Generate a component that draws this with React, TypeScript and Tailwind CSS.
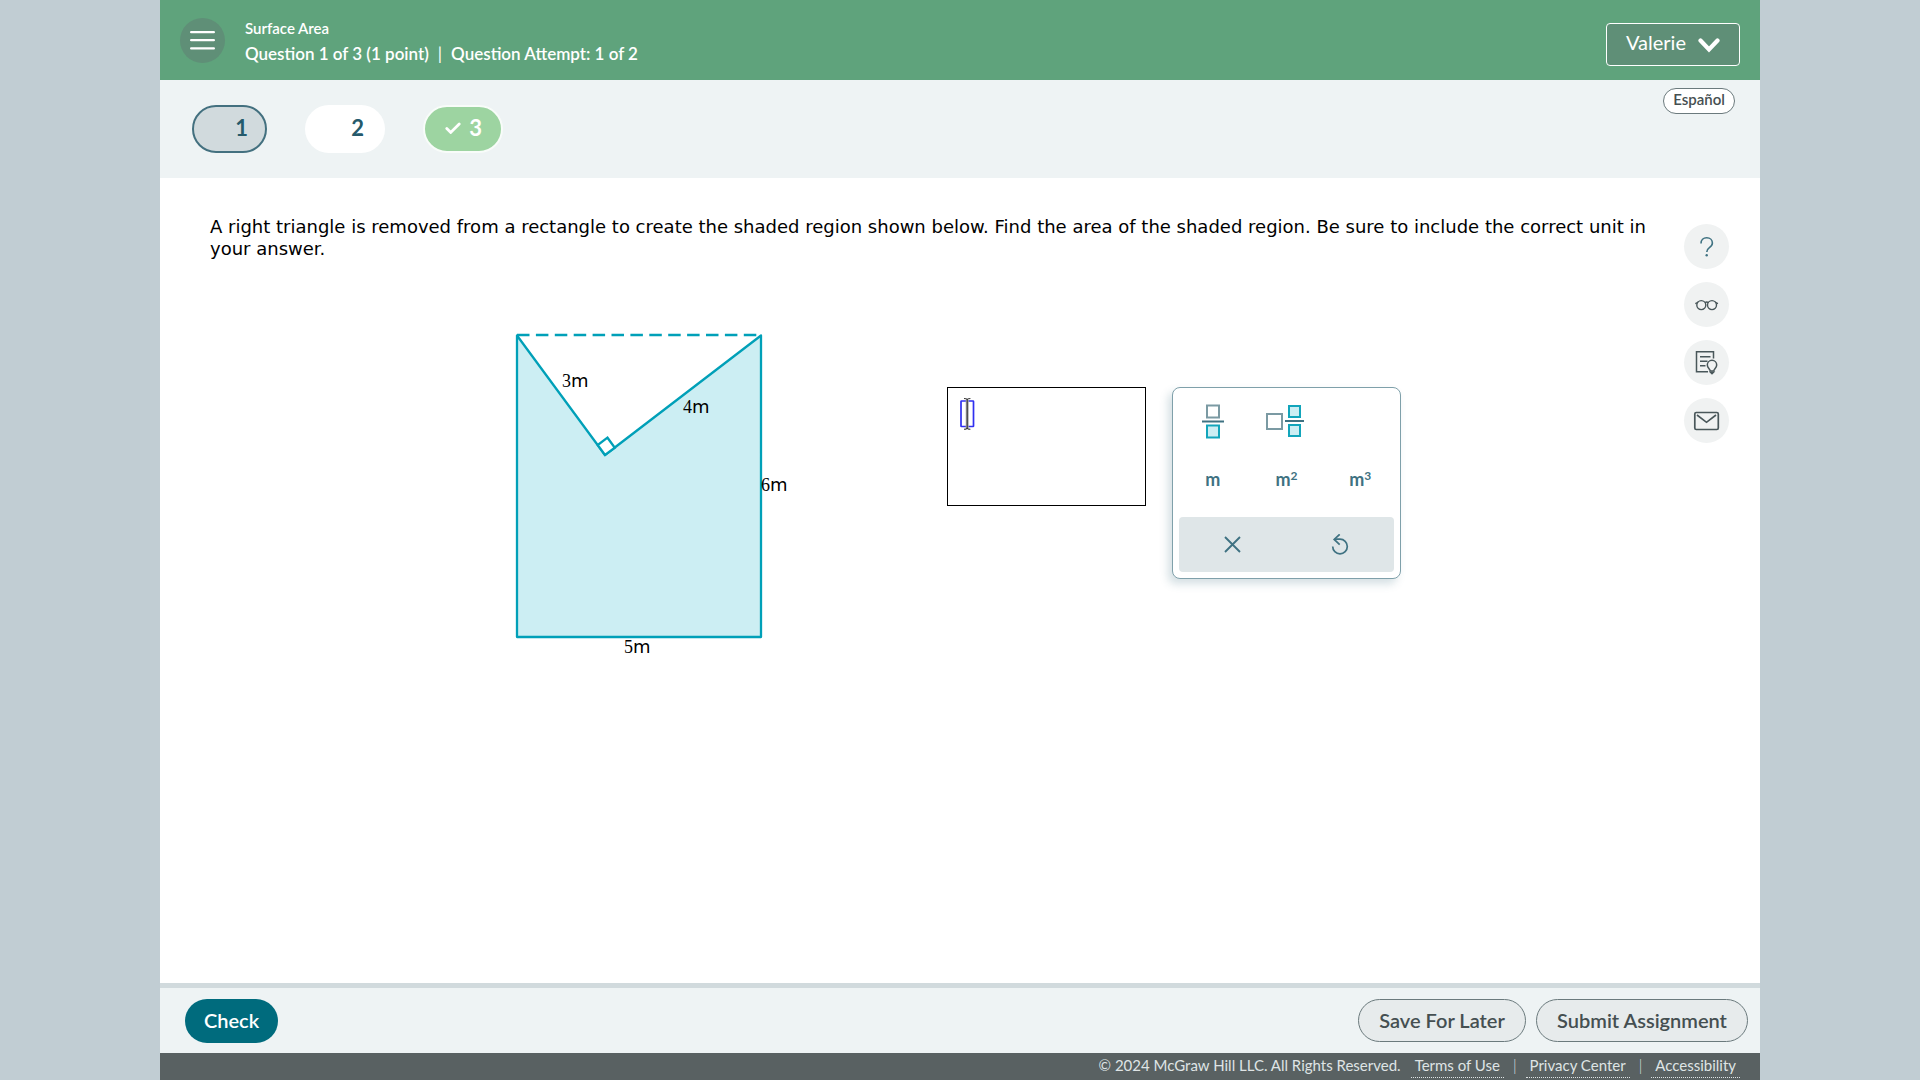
import React from 'react';

const tools = [
  { label: 'Help', icon: 'help' as const },
  { label: 'Read aloud view', icon: 'glasses' as const },
  { label: 'Notes', icon: 'notes' as const },
  { label: 'Message instructor', icon: 'mail' as const },
];

const footerLinks = ['Terms of Use', 'Privacy Center', 'Accessibility'];

const ToolIcon: React.FC<{ name: 'help' | 'glasses' | 'notes' | 'mail' }> = ({ name }) => {
  if (name === 'help') {
    return (
      <svg width="45" height="45" viewBox="0 0 45 45" fill="none" stroke="#3f7282" strokeWidth="1.6">
        <path d="M17 19.5c0-3.4 2.3-5.7 5.7-5.7s5.7 2.2 5.7 5.2c0 2.3-1.3 3.5-3 4.6-1.8 1.2-2.6 2-2.6 4.4" />
        <circle cx="22.7" cy="31.2" r="1.2" fill="#3f7282" stroke="none" />
      </svg>
    );
  }
  if (name === 'glasses') {
    return (
      <svg width="45" height="45" viewBox="0 0 45 45" fill="none" stroke="#49575a" strokeWidth="1.4">
        <circle cx="17.3" cy="23.1" r="4.5" />
        <circle cx="28" cy="23.1" r="4.5" />
        <path d="M21 20.8c1-.9 2.4-.9 3.4 0M11.3 21.6l1.6-.6 1.2-1M34 21.6l-1.6-.6-1.2-1" />
      </svg>
    );
  }
  if (name === 'notes') {
    return (
      <svg width="45" height="45" viewBox="0 0 45 45" fill="none" stroke="#49575a" strokeWidth="1.5">
        <path d="M29.5 18.5v-6.7h-17v20H24" />
        <path d="M16 16.7h10.5M16 21.2h7.5M16 25.7h5.5" />
        <path d="M26.2 31c0-1.8-2.9-2.9-2.9-6a4.7 4.7 0 0 1 9.4 0c0 3.1-2.9 4.2-2.9 6z" />
        <path d="M26.5 32.2h3l-1.5 1.5z" fill="#49575a" />
      </svg>
    );
  }
  return (
    <svg width="45" height="45" viewBox="0 0 45 45" fill="none" stroke="#49575a" strokeWidth="1.7">
      <rect x="10.8" y="14.5" width="23.5" height="17" rx="1.5" />
      <path d="M13 17l9.5 7.3L32 17" />
    </svg>
  );
};

// Rectangle with the right triangle cut out of its top edge
const Figure = () => (
  <svg width="280" height="325" viewBox="0 0 280 325" role="img" aria-label="Shaded region" className="overflow-visible">
    <g stroke="#00a0b8" strokeWidth="2.3">
      <path d="M0 2.5v301.500h244V2.500L88 122z" fill="#cceef3" strokeLinejoin="round" />
      <path d="M0 2h244" strokeDasharray="12.5 6.4" />
      <path d="M88 122l-7.300-10 9.800-7.300 7.300 10z" fill="#fff" />
    </g>
    <g fontSize="18" fontFamily="'DejaVu Sans', sans-serif" fill="#000">
      {[
        { n: '3', x: 45, y: 54 },
        { n: '4', x: 166, y: 80 },
        { n: '6', x: 244, y: 158 },
        { n: '5', x: 107, y: 320 },
      ].map((side) => (
        <text key={side.n} x={side.x} y={side.y}>
          <tspan fontFamily="'Liberation Serif', serif">{side.n}</tspan>
          <tspan>m</tspan>
        </text>
      ))}
    </g>
  </svg>
);

const FractionIcon = () => (
  <svg width="24" height="36" viewBox="0 0 24 36" fill="none">
    <rect x="6" y="1.5" width="12" height="12" stroke="#7b9aa3" strokeWidth="2" />
    <path d="M1 17.5h22" stroke="#3f7282" strokeWidth="2" />
    <rect x="6" y="21.5" width="12" height="12" fill="#cceef3" stroke="#12a5bb" strokeWidth="2" />
  </svg>
);

const MixedNumberIcon = () => (
  <svg width="40" height="36" viewBox="0 0 40 36" fill="none">
    <rect x="1" y="10" width="15" height="15" stroke="#7b9aa3" strokeWidth="2" />
    <rect x="23" y="2" width="11" height="11" fill="#cceef3" stroke="#12a5bb" strokeWidth="2" />
    <path d="M19 17h19" stroke="#3f7282" strokeWidth="2" />
    <rect x="23" y="21" width="11" height="11" fill="#cceef3" stroke="#12a5bb" strokeWidth="2" />
  </svg>
);

const Palette = () => (
  <div className="w-[229px] h-48 p-1.5 pt-0 flex flex-col rounded-lg border border-[#7fa0aa] bg-white shadow-[-4px_5px_8px_rgba(63,114,130,0.22)]">
    <div className="flex-1 -mx-[3px] grid grid-cols-3 grid-rows-[64px_1fr] text-lg font-bold text-[#3f7282]">
      <button aria-label="Fraction" className="flex items-center justify-center pt-1"><FractionIcon /></button>
      <button aria-label="Mixed number" className="flex items-center justify-center pt-1"><MixedNumberIcon /></button>
      <span />
      <button className="pb-3">m</button>
      <button className="pb-3">m<sup className="text-xs">2</sup></button>
      <button className="pb-3">m<sup className="text-xs">3</sup></button>
    </div>
    <div className="h-[55px] grid grid-cols-2 rounded bg-[#dfe6e8]">
      <button aria-label="Clear" className="flex items-center justify-center">
        <svg width="18" height="18" viewBox="0 0 18 18" stroke="#3f7282" strokeWidth="1.9">
          <path d="M1 1l15 15M16 1L1 16" />
        </svg>
      </button>
      <button aria-label="Undo" className="flex items-center justify-center">
        <svg width="18" height="22" viewBox="0 0 18 22" fill="none" stroke="#3f7282" strokeWidth="1.7">
          <path d="M1.7 12.5a7.3 7.3 0 1 0 7.3-7.3H3.500" />
          <path d="M8.7.3L3.200 5.400l5.500 5.200" />
        </svg>
      </button>
    </div>
  </div>
);

const App: React.FC = () => {
  return (
    <div className="min-h-screen bg-[#c1cdd3] px-40 flex flex-col font-[Lato,sans-serif]">
      <header className="h-20 px-5 flex items-start bg-[#5fa37c] text-white">
        <button aria-label="Menu" className="mt-[18px] w-[45px] h-[45px] flex items-center justify-center rounded-full bg-[#5f8f77]">
          <svg width="25" height="19" viewBox="0 0 25 19" stroke="#fff" strokeWidth="2.2" strokeLinecap="round">
            <path d="M1.1 1.200h22.800M1.100 9.200h22.800M1.100 17.400h22.800" />
          </svg>
        </button>
        <div className="ml-5 mt-[18px] font-semibold">
          <h1 className="text-[15px] leading-5">Surface Area</h1>
          <p className="mt-1 flex text-[17px] leading-6">
            <span>Question 1 of 3 (1 point)</span>
            <span className="mx-[9px] font-normal">|</span>
            <span>Question Attempt: 1 of 2</span>
          </p>
        </div>
        <button className="ml-auto mt-[23px] h-[43px] w-[134px] pb-1.5 flex items-center justify-center gap-3 rounded border border-white bg-[#5f8f77] text-xl">
          Valerie
          <svg width="22" height="16" viewBox="0 0 22 16" fill="none" stroke="#fff" strokeWidth="4.2" strokeLinecap="round" className="mt-1.5">
            <path d="M2.5 3.500l8.500 9 8.500-9" />
          </svg>
        </button>
      </header>

      <nav className="h-[98px] pl-8 pr-[25px] flex items-start bg-[#eef3f4] text-[22px] font-bold text-[#255a6b]">
        <div className="mt-[25px] flex gap-[38px]">
          <button className="w-[75px] h-12 pb-1 pr-[17px] text-right rounded-full border-2 border-[#43707f] bg-[#d1dadd]">1</button>
          <button className="w-20 h-12 pb-1 pr-[21px] text-right rounded-full bg-white">2</button>
          <button className="w-20 h-12 pb-1 pr-[19px] flex items-center justify-end gap-2 rounded-full border-2 border-[#f8fcf9] bg-[#9dd4a1] text-white">
            <svg width="16" height="13" viewBox="0 0 16 13" fill="none" stroke="#fff" strokeWidth="2.8" strokeLinecap="round">
              <path d="M1.8 7.500l3.900 3.900L14.200 2.900" />
            </svg>
            3
          </button>
        </div>
        <button className="ml-auto mt-2 w-[72px] h-[26px] pb-1 flex items-center justify-center rounded-full border border-[#6b7a7d] bg-white text-[15px] font-semibold text-[#454f51]">
          Español
        </button>
      </nav>

      <main className="flex-1 pl-[50px] pr-[31px] flex justify-between gap-9 bg-white text-black">
        <div className="flex-1">
          <p className="mt-[38px] text-lg leading-[22px] font-[DejaVu_Sans,sans-serif]">
            A right triangle is removed from a rectangle to create the shaded region shown below. Find the area of the shaded region. Be sure to include the correct unit in your answer.
          </p>
          <div className="mt-[73px] pl-[60px] flex items-start justify-center">
            <Figure />
            <div className="relative ml-[150px] mt-[54px]">
              <textarea aria-label="Answer" className="block w-[199px] h-[119px] p-4 resize-none border border-black outline-none" />
              {/* empty slot with the text caret in it */}
              <svg width="18" height="34" viewBox="0 0 18 34" fill="none" className="absolute left-3 top-2.5 pointer-events-none">
                <rect x="2" y="4" width="12.5" height="25.5" rx="0.5" stroke="#3030f0" strokeWidth="1.7" />
                <path d="M8.2 3v28" stroke="#aaa" strokeWidth="3" />
                <path d="M8.2 3v28M5 1.500c1.600 0 3.200.5 3.200 1.500 0-1 1.600-1.500 3.200-1.500M5 32.300c1.600 0 3.200-.5 3.200-1.500 0 1 1.600 1.500 3.200 1.500" stroke="#333" strokeWidth="1.1" />
              </svg>
            </div>
            <div className="ml-[26px] mt-[54px]">
              <Palette />
            </div>
          </div>
        </div>
        <aside className="mt-[46px] flex flex-col gap-[13px]">
          {tools.map((tool) => (
            <button key={tool.label} aria-label={tool.label} className="w-[45px] h-[45px] rounded-full bg-[#f0f2f2]">
              <ToolIcon name={tool.icon} />
            </button>
          ))}
        </aside>
      </main>

      <div className="h-[70px] pl-[25px] pr-3 flex items-center gap-2.5 border-t-[5px] border-[#d1dadd] bg-[#eef3f4] text-xl font-semibold">
        <button className="w-[93px] h-11 pb-0.5 rounded-full bg-[#006b7d] text-white">Check</button>
        <button className="ml-auto w-[168px] h-[43px] pb-0.5 rounded-full border border-[#6b7a7d] bg-[#e7ebec] text-[#454f51]">Save For Later</button>
        <button className="w-[212px] h-[43px] pb-0.5 rounded-full border border-[#6b7a7d] bg-[#e7ebec] text-[#454f51]">Submit Assignment</button>
      </div>

      <footer className="h-[27px] pr-5 flex justify-end bg-[#596162] text-[15px] leading-6 text-[#dfe4e5]">
        <span className="mr-2.5">© 2024 McGraw Hill LLC. All Rights Reserved.</span>
        {footerLinks.map((label, i) => (
          <React.Fragment key={label}>
            {i > 0 && <span className="mx-[9px] font-light">|</span>}
            <a href="#" className="h-[25px] px-1 border-b border-dotted border-[#dfe4e5]">{label}</a>
          </React.Fragment>
        ))}
      </footer>
    </div>
  );
};

export default App;
